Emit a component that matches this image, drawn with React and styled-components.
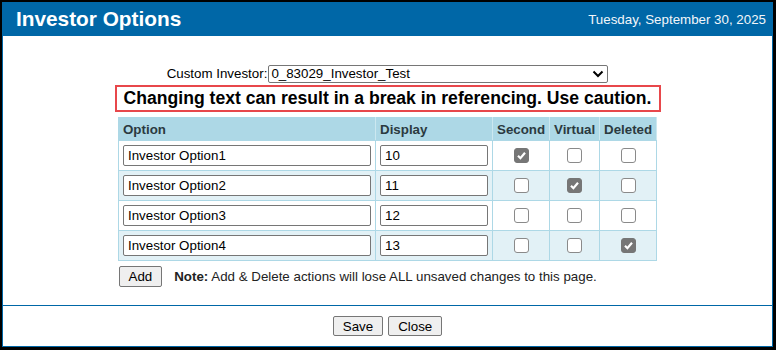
import React from "react";
import styled, { createGlobalStyle } from "styled-components";

const GlobalStyle = createGlobalStyle`
  html, body {
    margin: 0;
    padding: 0;
    background: #000;
  }
  body {
    font-family: "Liberation Sans", Arial, sans-serif;
    font-size: 13.33px;
    color: #000;
  }
`;

const Page = styled.div`
  width: 776px;
  height: 350px;
  padding: 2px 3px 3px 2px;
  box-sizing: border-box;
`;

const Frame = styled.div`
  height: 345px;
  box-sizing: border-box;
  border: 1px solid #0067a7;
  border-top: none;
  background: #fff;
  display: flex;
  flex-direction: column;
`;

const Header = styled.div`
  height: 34px;
  background: #0067a7;
  display: flex;
  align-items: center;
  justify-content: space-between;
  padding: 0 6px 0 13px;
  color: #fff;
`;

const Title = styled.h1`
  margin: 0;
  font-size: 20.8px;
  font-weight: bold;
`;

const DateText = styled.span`
  font-size: 13.33px;
  color: #f2f6fa;
`;

const Body = styled.div`
  flex: 1;
  display: flex;
  flex-direction: column;
  align-items: center;
  padding-top: 28px;
`;

const InvestorRow = styled.div`
  display: flex;
  align-items: center;
  height: 19px;
`;

const SelectWrap = styled.span`
  position: relative;
  display: inline-block;
  margin-left: 1px;
`;

const Select = styled.select`
  display: block;
  width: 340px;
  height: 18px;
  padding: 0 2px;
  font-family: inherit;
  font-size: 13.33px;
  color: #000;
  border: 1px solid #767676;
  border-radius: 2px;
  background: #fff;
  appearance: none;
`;

const Chevron = styled.svg`
  position: absolute;
  right: 4px;
  top: 5px;
  pointer-events: none;
`;

const Warning = styled.div`
  margin-top: 2px;
  width: 546px;
  height: 27px;
  box-sizing: border-box;
  border: 2px solid #e8474b;
  display: flex;
  align-items: center;
  justify-content: center;
  font-size: 17.6px;
  font-weight: bold;
`;

const Table = styled.table`
  margin-top: 5px;
  border-collapse: collapse;
  width: 538px;
  table-layout: fixed;
`;

const Th = styled.th`
  background: #add8e6;
  height: 23px;
  padding: 0 4px;
  box-sizing: border-box;
  font-size: 13.33px;
  font-weight: bold;
  color: #2b3a40;
  text-align: ${(p) => (p.$left ? "left" : "center")};
  border: 1px solid #add8e6;
  border-right-color: #cce8f0;
`;

const Row = styled.tr`
  background: ${(p) => (p.$alt ? "#e2f1f6" : "#fff")};
`;

const Td = styled.td`
  height: 30px;
  padding: 0 4px;
  box-sizing: border-box;
  border: 1px solid #add8e6;
  text-align: ${(p) => (p.$center ? "center" : "left")};
  vertical-align: middle;
`;

const TextInput = styled.input`
  display: block;
  width: ${(p) => p.$width}px;
  height: 21px;
  box-sizing: border-box;
  padding: 0 4px;
  font-family: inherit;
  font-size: 13.33px;
  border: 1px solid #767676;
  border-radius: 2px;
  background: #fff;
`;

const Box = styled.span`
  display: inline-flex;
  align-items: center;
  justify-content: center;
  width: 15px;
  height: 15px;
  box-sizing: border-box;
  border-radius: 3px;
  border: 1px solid ${(p) => (p.$checked ? "#767676" : "#8a8a8a")};
  background: ${(p) => (p.$checked ? "#767676" : "#fff")};
  vertical-align: middle;
`;

const ActionRow = styled.div`
  width: 538px;
  margin-top: 5px;
  display: flex;
  align-items: center;
  gap: 12px;
`;

const Button = styled.button`
  height: ${(p) => p.$h || 20}px;
  padding: 0 9px;
  font-family: inherit;
  font-size: 13.33px;
  color: #000;
  background: #efefef;
  border: 1px solid #767676;
  border-radius: 2px;
`;

const Note = styled.span`
  font-size: 13.33px;
  color: #222;
`;

const Footer = styled.div`
  height: 41px;
  border-top: 1px solid #0067a7;
  display: flex;
  justify-content: center;
  align-items: flex-start;
  padding-top: 10px;
  box-sizing: border-box;
  gap: 5px;
`;

const Check = ({ checked }) => (
  <Box $checked={checked}>
    {checked && (
      <svg width="11" height="11" viewBox="0 0 11 11">
        <path d="M2 5.8 L4.4 8.2 L9 2.8" fill="none" stroke="#fff" strokeWidth="2.2" />
      </svg>
    )}
  </Box>
);

const options = [
  { name: "Investor Option1", display: "10", second: true, virtual: false, deleted: false },
  { name: "Investor Option2", display: "11", second: false, virtual: true, deleted: false },
  { name: "Investor Option3", display: "12", second: false, virtual: false, deleted: false },
  { name: "Investor Option4", display: "13", second: false, virtual: false, deleted: true },
];

export default function App() {
  return (
    <Page>
      <GlobalStyle />
      <Frame>
        <Header>
          <Title>Investor Options</Title>
          <DateText>Tuesday, September 30, 2025</DateText>
        </Header>
        <Body>
          <InvestorRow>
            <span>Custom Investor:</span>
            <SelectWrap>
              <Select defaultValue="test">
                <option value="test">0_83029_Investor_Test</option>
              </Select>
              <Chevron width="12" height="8" viewBox="0 0 12 8">
                <path d="M1.5 1.5 L6 6 L10.5 1.5" fill="none" stroke="#000" strokeWidth="2" />
              </Chevron>
            </SelectWrap>
          </InvestorRow>
          <Warning>Changing text can result in a break in referencing. Use caution.</Warning>
          <Table>
            <colgroup>
              <col style={{ width: 257 }} />
              <col style={{ width: 117 }} />
              <col style={{ width: 57 }} />
              <col style={{ width: 50 }} />
              <col style={{ width: 57 }} />
            </colgroup>
            <thead>
              <tr>
                <Th $left>Option</Th>
                <Th $left>Display</Th>
                <Th>Second</Th>
                <Th>Virtual</Th>
                <Th>Deleted</Th>
              </tr>
            </thead>
            <tbody>
              {options.map((o, i) => (
                <Row key={o.name} $alt={i % 2 === 1}>
                  <Td>
                    <TextInput $width={248} defaultValue={o.name} />
                  </Td>
                  <Td>
                    <TextInput $width={108} defaultValue={o.display} />
                  </Td>
                  <Td $center>
                    <Check checked={o.second} />
                  </Td>
                  <Td $center>
                    <Check checked={o.virtual} />
                  </Td>
                  <Td $center>
                    <Check checked={o.deleted} />
                  </Td>
                </Row>
              ))}
            </tbody>
          </Table>
          <ActionRow>
            <Button $h={21}>Add</Button>
            <Note>
              <b>Note:</b> Add &amp; Delete actions will lose ALL unsaved changes to this page.
            </Note>
          </ActionRow>
        </Body>
        <Footer>
          <Button>Save</Button>
          <Button>Close</Button>
        </Footer>
      </Frame>
    </Page>
  );
}
